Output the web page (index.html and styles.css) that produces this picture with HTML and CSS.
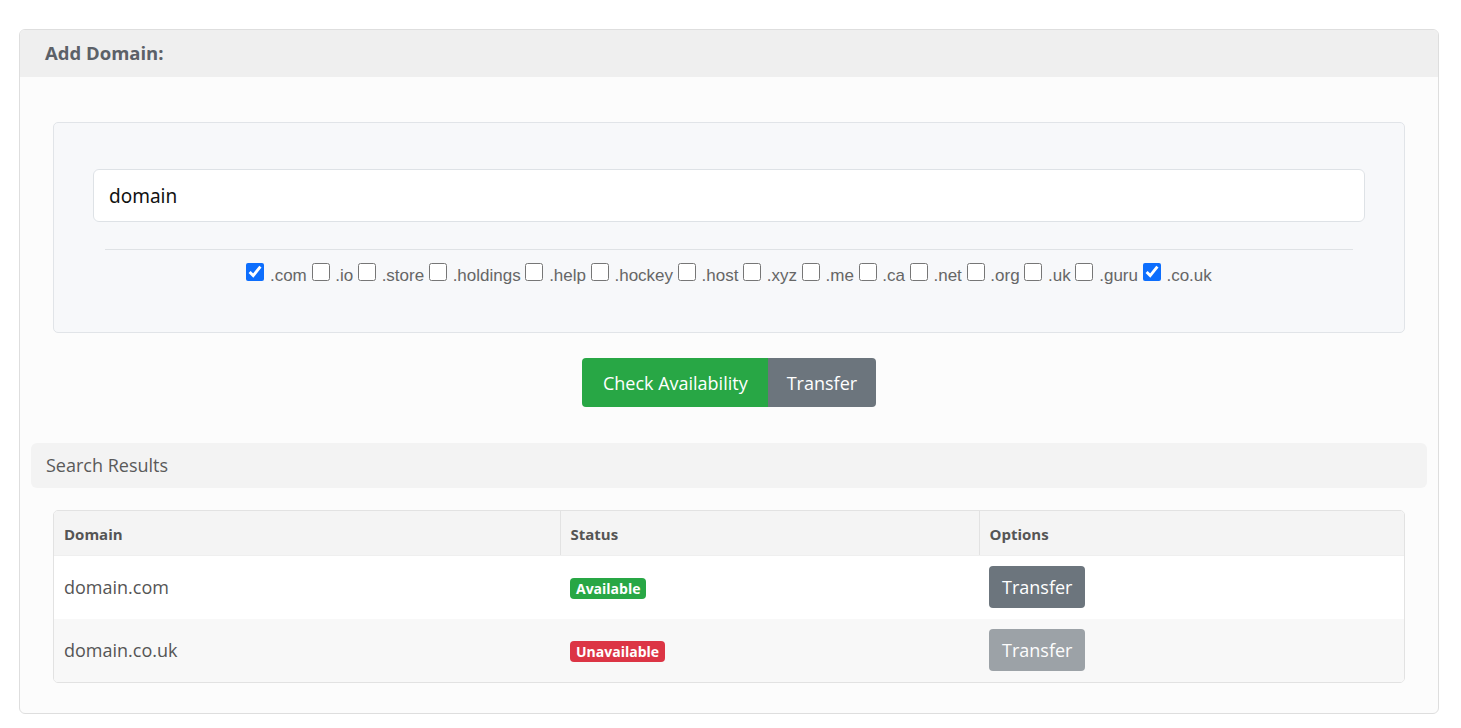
FILE: index.html
```html
<!DOCTYPE html>
<html lang="en">
<head>
    <meta charset="UTF-8">
    <meta name="viewport" content="width=device-width, initial-scale=1.0">
    <title>Add Domain</title>
    <link rel="stylesheet" href="styles.css">
</head>
<body>
    <div class="card">
        <div class="card-header">Add Domain:</div>
        <div class="card-body">
            <div class="search-panel">
                <input class="domain-input" type="text" value="domain">
                <hr class="divider">
                <div class="tld-list">
                    <label><input type="checkbox" checked> .com</label>
                    <label><input type="checkbox"> .io</label>
                    <label><input type="checkbox"> .store</label>
                    <label><input type="checkbox"> .holdings</label>
                    <label><input type="checkbox"> .help</label>
                    <label><input type="checkbox"> .hockey</label>
                    <label><input type="checkbox"> .host</label>
                    <label><input type="checkbox"> .xyz</label>
                    <label><input type="checkbox"> .me</label>
                    <label><input type="checkbox"> .ca</label>
                    <label><input type="checkbox"> .net</label>
                    <label><input type="checkbox"> .org</label>
                    <label><input type="checkbox"> .uk</label>
                    <label><input type="checkbox"> .guru</label>
                    <label><input type="checkbox" checked> .co.uk</label>
                </div>
            </div>

            <div class="btn-group">
                <button class="btn btn-green">Check Availability</button>
                <button class="btn btn-gray">Transfer</button>
            </div>

            <div class="results-bar">Search Results</div>

            <div class="results-wrap">
                <table class="results">
                    <thead>
                        <tr>
                            <th class="col-domain">Domain</th>
                            <th class="col-status">Status</th>
                            <th>Options</th>
                        </tr>
                    </thead>
                    <tbody>
                        <tr>
                            <td>domain.com</td>
                            <td><span class="badge badge-ok">Available</span></td>
                            <td><button class="btn btn-gray btn-small">Transfer</button></td>
                        </tr>
                        <tr class="alt">
                            <td>domain.co.uk</td>
                            <td><span class="badge badge-no">Unavailable</span></td>
                            <td><button class="btn btn-gray btn-small disabled" disabled>Transfer</button></td>
                        </tr>
                    </tbody>
                </table>
            </div>
        </div>
    </div>
</body>
</html>
```

FILE: styles.css
```css
body {
    margin: 0;
    padding: 29px 22px 0 19px;
    background-color: #ffffff;
    font-family: 'Open Sans', 'Noto Sans', sans-serif;
    color: #555;
}

.card {
    border: 1px solid #dedede;
    border-radius: 6px;
    background-color: #fcfcfc;
    overflow: hidden;
}

.card-header {
    background-color: #efefef;
    height: 47px;
    line-height: 46px;
    padding-left: 25px;
    font-size: 18.5px;
    font-weight: bold;
    color: #5c6168;
}

.card-body {
    padding: 45px 11px 30px 11px;
}

.search-panel {
    margin: 0 22px;
    background-color: #f7f8fa;
    border: 1px solid #e1e4e8;
    border-radius: 5px;
    padding: 46px 39px 43px 39px;
}

.domain-input {
    display: block;
    box-sizing: border-box;
    width: 100%;
    height: 53px;
    border: 1px solid #dee2e6;
    border-radius: 6px;
    background: #fff;
    padding: 0 15px;
    font-family: 'Noto Sans', 'Liberation Sans', sans-serif;
    font-size: 19px;
    color: #111;
    outline: none;
}

.divider {
    border: 0;
    border-top: 1px solid #dfe2e5;
    margin: 27px 12px 12px 12px;
}

.tld-list {
    text-align: center;
    font-family: 'Liberation Sans', Arial, sans-serif;
    font-size: 17px;
    color: #666;
    line-height: 27px;
}

.tld-list input {
    width: 18px;
    height: 18px;
    margin: 0 1px 0 0;
    vertical-align: 0;
    accent-color: #0d6efd;
}

.btn-group {
    display: flex;
    justify-content: center;
    margin-top: 25px;
}

.btn {
    border: 0;
    font-family: 'Open Sans', 'Noto Sans', sans-serif;
    font-size: 18px;
    color: #fff;
    height: 49px;
    padding: 0 19px;
    cursor: pointer;
}

.btn-green {
    background-color: #28a745;
    border-radius: 4px 0 0 4px;
    padding: 0 20px 0 21px;
}

.btn-gray {
    background-color: #6c757d;
    border-radius: 0 4px 4px 0;
}

.results-bar {
    margin-top: 36px;
    background-color: #f3f3f3;
    border-radius: 6px;
    height: 45px;
    line-height: 44px;
    padding-left: 15px;
    font-size: 18px;
    color: #5a5a5a;
}

.results-wrap {
    margin: 22px 22px 0 22px;
    border: 1px solid #e2e2e2;
    border-radius: 5px;
    overflow: hidden;
}

.results {
    width: 100%;
    border-collapse: collapse;
}

.results th {
    box-sizing: border-box;
    background-color: #f4f4f4;
    text-align: left;
    font-size: 15px;
    font-weight: bold;
    color: #555;
    height: 44px;
    padding: 3px 10px 0 10px;
    border-bottom: 1px solid #efefef;
}

.results th.col-domain {
    width: 506px;
    border-right: 1px solid #e2e2e2;
}

.results th.col-status {
    width: 419px;
    border-right: 1px solid #e2e2e2;
}

.results td {
    background-color: #fff;
    height: 63px;
    padding: 0 10px;
    font-size: 18px;
    color: #555;
}

.results tr.alt td {
    background-color: #f8f8f8;
}

.badge {
    display: inline-block;
    font-size: 14px;
    font-weight: bold;
    color: #fff;
    padding: 0 6px;
    height: 21px;
    line-height: 21px;
    border-radius: 4px;
}

.badge-ok {
    background-color: #28a745;
}

.badge-no {
    background-color: #dc3545;
}

.btn-small {
    height: 42px;
    padding: 0 13px;
    border-radius: 4px;
}

.btn-small.disabled {
    opacity: 0.65;
    cursor: default;
}
```
